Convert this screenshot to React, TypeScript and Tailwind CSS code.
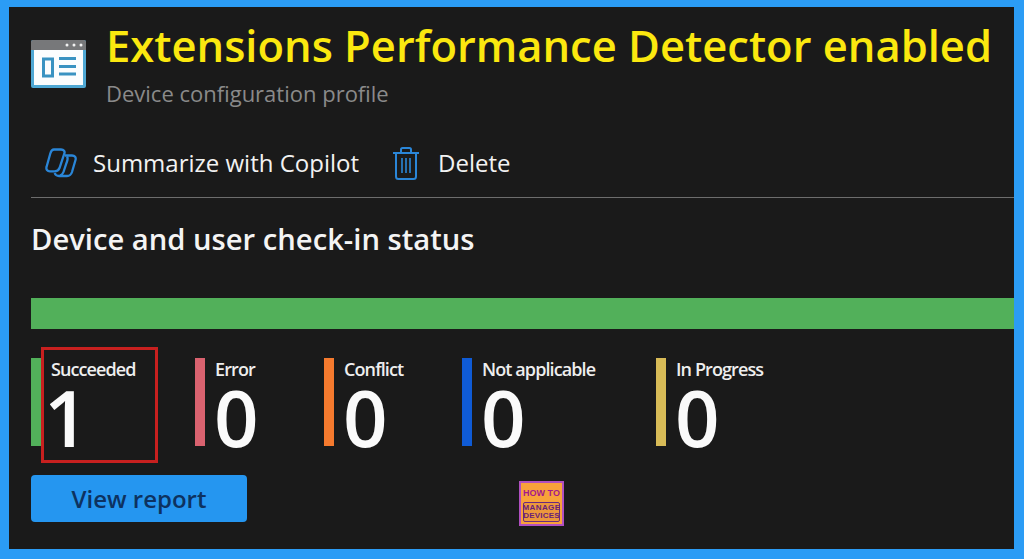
const stats = [
  { label: "Succeeded", value: "1", color: "bg-[#52b05a]", width: "w-[164px]", shift: "ml-[-7px]" },
  { label: "Error", value: "0", color: "bg-[#d9626f]", width: "w-[129px]", shift: "ml-[-1px]" },
  { label: "Conflict", value: "0", color: "bg-[#f57a2e]", width: "w-[138px]", shift: "ml-[-1px]" },
  { label: "Not applicable", value: "0", color: "bg-[#0f5bd6]", width: "w-[194px]", shift: "ml-[-1px]" },
  { label: "In Progress", value: "0", color: "bg-[#d8bb57]", width: "w-[130px]", shift: "ml-[-1px]" },
]

function ProfileIcon() {
  return (
    <svg width="55" height="48" viewBox="0 0 55 48" className="shrink-0">
      <rect x="0" y="0" width="55" height="48" rx="2" fill="#4fa8d4" />
      <path d="M0 10V2a2 2 0 0 1 2-2h51a2 2 0 0 1 2 2v8z" fill="#77787a" />
      <rect x="3" y="10" width="49" height="35" fill="#fbfdfe" />
      <circle cx="36" cy="5" r="1.5" fill="#f2f2f2" />
      <circle cx="43" cy="5" r="1.5" fill="#f2f2f2" />
      <circle cx="50" cy="5" r="1.5" fill="#f2f2f2" />
      <rect x="12.500" y="19" width="9" height="17" fill="none" stroke="#3a93c2" strokeWidth="3" />
      <path d="M28 18.500h17M28 26.500h17M28 34h17" stroke="#3a93c2" strokeWidth="3" />
    </svg>
  )
}

function CopilotIcon() {
  return (
    <svg width="32" height="30" viewBox="0 0 32 30" fill="none" stroke="#2a86d8" strokeWidth="2.300" className="shrink-0">
      <path d="M9 1.500h7c2.800 0 4.200 1.700 3.300 4.200L14.500 20c-.8 2.200-2.500 3.300-5 3.300H5c-2.800 0-4.200-2-3.400-4.600L5.300 5.500C6 3 7 1.500 9 1.500z" />
      <path d="M20 7.500h7c2.800 0 4.300 2 3.500 4.500l-3.500 12c-.8 2.500-2.500 4-5 4h-8c-2.200 0-3.700-1-4.300-3" />
      <path d="M22 8.500c1.500 2 .5 4-.5 6.500l-3 9c-.7 2-1.700 3-3.500 3.500" />
    </svg>
  )
}

function TrashIcon() {
  return (
    <svg width="26" height="33" viewBox="0 0 26 33" fill="none" stroke="#2a86d8" strokeWidth="2" className="shrink-0">
      <path d="M0 6h26" />
      <path d="M8 6V2.500A1.500 1.500 0 0 1 9.500 1h7A1.500 1.500 0 0 1 18 2.500V6" />
      <path d="M3 6v23.500A2.500 2.500 0 0 0 5.500 32h15a2.500 2.500 0 0 0 2.500-2.500V6" />
      <path d="M9 11v15M13 11v15M17 11v15" strokeWidth="1.600" />
    </svg>
  )
}

function LogoBadge() {
  return (
    <div className="flex h-[45px] w-[45px] flex-col items-center border-2 border-[#b04fc0] bg-[#f8a23a] pt-[5px] font-['Liberation_Sans',sans-serif] font-bold leading-none">
      <span className="text-[9px] leading-[10px] text-[#a3198c]">HOW TO</span>
      <div className="mt-[4px] flex w-[37px] flex-col items-center rounded-[2px] border border-[#6a2a80] bg-[#ec983c] py-[1px] text-[#6a1f78]">
        <span className="text-[8px] leading-[8px] tracking-[0.4px]">MANAGE</span>
        <span className="text-[8px] leading-[8px] tracking-[0.2px]">DEVICES</span>
      </div>
    </div>
  )
}

export default function App() {
  return (
    <div className="h-[559px] w-[1024px] overflow-hidden bg-[#2b9cf5] pb-[10px] pl-[9px] pr-[10px] pt-[7px] font-['Open_Sans','Noto_Sans',sans-serif]">
      <div className="h-full bg-[#1a1a1a] pl-[22px]">
        {/* Header */}
        <div className="flex items-start pt-[13px]">
          <div className="mt-[20px]">
            <ProfileIcon />
          </div>
          <div className="ml-[20px]">
            <h1 className="whitespace-nowrap text-[43.500px] font-semibold leading-[52px] text-[#fbe80f]">
              Extensions Performance Detector enabled
            </h1>
            <p className="mt-[7px] text-[22px] leading-[28px] text-[#8a8a8a]">Device configuration profile</p>
          </div>
        </div>

        {/* Command bar */}
        <div className="mt-[26px] flex h-[65px] items-center border-b border-[#6d6d6d] pb-[4px] pl-[14px] text-[24px] text-[#f2f2f2]">
          <CopilotIcon />
          <span className="ml-[16px]">Summarize with Copilot</span>
          <div className="ml-[34px]">
            <TrashIcon />
          </div>
          <span className="ml-[19px]">Delete</span>
        </div>

        <h2 className="mt-[21px] text-[29.200px] font-semibold leading-[40px] text-[#f4f4f4]">
          Device and user check-in status
        </h2>

        <div className="mt-[39px] h-[31px] bg-[#52b05a]" />

        {/* Stats */}
        <div className="mt-[29px] flex">
          {stats.map((s) => (
            <div key={s.label} className={`flex h-[88px] ${s.width}`}>
              <div className={`h-full w-[10px] shrink-0 ${s.color}`} />
              <div className="ml-[10px] flex flex-col">
                <span className="mt-[-1px] whitespace-nowrap text-[18px] font-semibold leading-[24px] tracking-[-0.9px] text-[#eeeeee]">
                  {s.label}
                </span>
                <span className={`mt-[6px] text-[78px] font-semibold leading-[60px] text-[#fafafa] ${s.shift}`}>{s.value}</span>
              </div>
            </div>
          ))}
        </div>

        {/* Bottom row */}
        <div className="relative mt-[29px] flex h-[48px] items-start">
          <button className="flex h-[47px] w-[216px] items-center justify-center rounded-[4px] bg-[#2596f0] text-[24px] font-semibold text-[#0d3260]">
            View report
          </button>
          <div className="absolute left-[488px] top-[6px]">
            <LogoBadge />
          </div>
          {/* highlight box around the succeeded stat */}
          <div className="absolute left-[10px] top-[-128px] h-[116px] w-[117px] border-[3px] border-[#c8201f]" />
        </div>
      </div>
    </div>
  )
}
